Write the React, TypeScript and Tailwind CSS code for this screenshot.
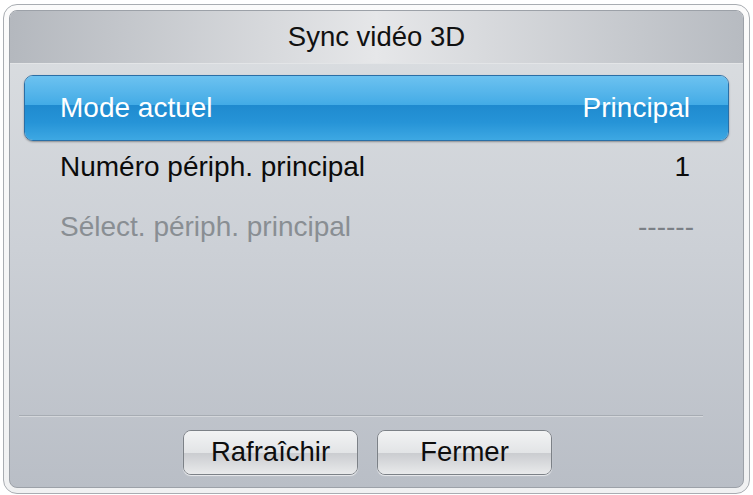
const font = { fontFamily: '"Liberation Sans", Arial, Helvetica, sans-serif' };

interface SettingRowProps {
  label: string;
  value: string;
  active?: boolean;
  disabled?: boolean;
}

// One line of the settings list; the active one gets the glossy blue bar.
function SettingRow({ label, value, active, disabled }: SettingRowProps) {
  if (active) {
    return (
      <div className="relative h-[66px] overflow-hidden rounded-[9px] border border-[#2b6fa6] shadow-[0_1px_2px_rgba(0,0,0,0.35)]">
        <div className="absolute inset-x-0 top-0 h-[46%] bg-gradient-to-b from-[#6cc2f0] to-[#42abe6]" />
        <div className="absolute inset-x-0 bottom-0 h-[54%] bg-gradient-to-b from-[#1f8acf] via-[#2694d7] to-[#3da8e3]" />
        <div className="relative flex h-full items-center justify-between pl-[35px] pr-[38px] text-[28px] leading-none text-white">
          <span>{label}</span>
          <span>{value}</span>
        </div>
      </div>
    );
  }
  return (
    <div
      className={`flex h-[60px] items-center justify-between pl-[36px] pr-[37px] pb-[8px] text-[28px] leading-none ${
        disabled ? "text-[#898e93]" : "text-[#0b0b0b]"
      }`}
    >
      <span>{label}</span>
      <span className={disabled ? "mr-[-2px] text-[#7b8086]" : "mr-[2px]"}>{value}</span>
    </div>
  );
}

function PanelButton({ label }: { label: string }) {
  return (
    <button className="relative h-[45px] w-[175px] overflow-hidden rounded-[8px] border border-[#7c8187] bg-[#d9dbde] shadow-[0_1px_1px_rgba(255,255,255,0.7)]">
      <span className="absolute inset-x-0 top-0 h-1/2 bg-gradient-to-b from-[#f2f3f4] to-[#e2e4e6]" />
      <span className="absolute inset-x-0 bottom-0 h-1/2 bg-gradient-to-b from-[#caccd0] to-[#e9eaeb]" />
      <span className="relative text-[27.5px] leading-none text-[#0d0d0d]">{label}</span>
    </button>
  );
}

export default function App() {
  return (
    <div className="h-[495px] w-[753px] overflow-hidden bg-white pl-[3px] pt-[4px]" style={font}>
      <div className="h-[490px] w-[747px] rounded-[14px] border border-[#a9adb2] bg-gradient-to-b from-[#fbfbfb] to-[#f0f1f2] p-[5px]">
        <div className="flex h-full flex-col overflow-hidden rounded-[8px] border border-[#9ca1a8] bg-gradient-to-b from-[#dcdfe2] via-[#ccd0d6] to-[#b9bec6]">
          <div className="flex h-[53px] shrink-0 items-center justify-center border-b border-[#e3e5e7] bg-gradient-to-r from-[#b4b8be] via-[#e6e7e9] to-[#b7bbc1] text-[27.5px] leading-none text-[#111]">
            Sync vidéo 3D
          </div>

          <div className="flex flex-col px-[14px] pt-[11px]">
            <SettingRow label="Mode actuel" value="Principal" active />
            <SettingRow label="Numéro périph. principal" value="1" />
            <SettingRow label="Sélect. périph. principal" value="------" disabled />
          </div>

          <div className="mt-auto">
            <div className="ml-[9px] mr-[40px] h-[2px] border-t border-[#a7acb3] bg-[#d4d7db]" />
            <div className="flex gap-[19px] pb-[12px] pl-[173px] pt-[13px]">
              <PanelButton label="Rafraîchir" />
              <PanelButton label="Fermer" />
            </div>
          </div>
        </div>
      </div>
    </div>
  );
}
